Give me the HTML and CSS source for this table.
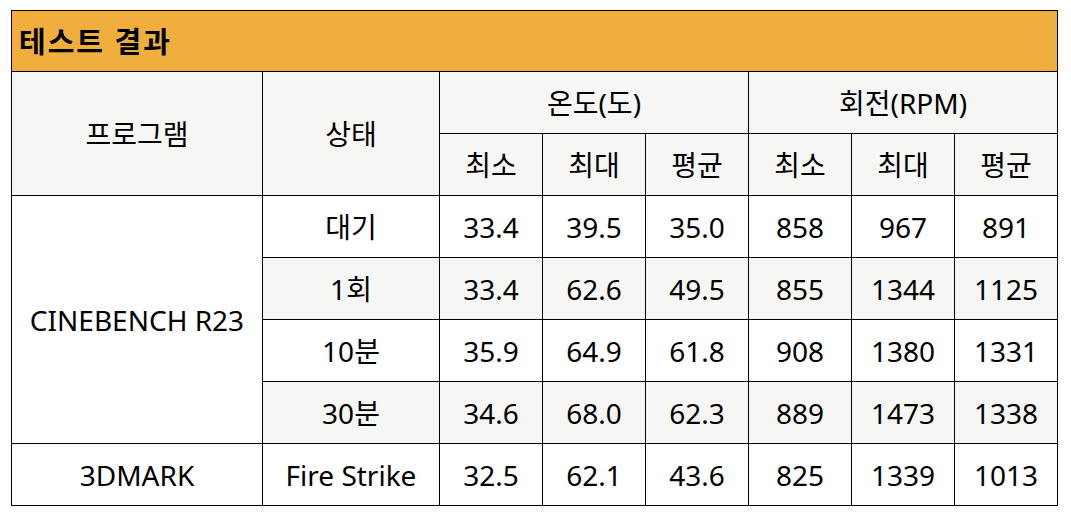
FILE: index.html
```html
<!DOCTYPE html>
<html lang="ko">
<head>
<meta charset="utf-8">
<link rel="stylesheet" href="styles.css">
</head>
<body>
<table class="result">
  <colgroup>
    <col class="c-prog"><col class="c-state">
    <col class="c-num"><col class="c-num"><col class="c-num">
    <col class="c-num"><col class="c-num"><col class="c-num">
  </colgroup>
  <thead>
    <tr class="title-row"><th colspan="8" class="title">테스트 결과</th></tr>
    <tr class="head">
      <th rowspan="2">프로그램</th>
      <th rowspan="2">상태</th>
      <th colspan="3">온도(도)</th>
      <th colspan="3">회전(RPM)</th>
    </tr>
    <tr class="head">
      <th>최소</th><th>최대</th><th>평균</th>
      <th>최소</th><th>최대</th><th>평균</th>
    </tr>
  </thead>
  <tbody>
    <tr>
      <td rowspan="4" class="prog">CINEBENCH R23</td>
      <td>대기</td><td>33.4</td><td>39.5</td><td>35.0</td><td>858</td><td>967</td><td>891</td>
    </tr>
    <tr class="alt">
      <td>1회</td><td>33.4</td><td>62.6</td><td>49.5</td><td>855</td><td>1344</td><td>1125</td>
    </tr>
    <tr>
      <td>10분</td><td>35.9</td><td>64.9</td><td>61.8</td><td>908</td><td>1380</td><td>1331</td>
    </tr>
    <tr class="alt">
      <td>30분</td><td>34.6</td><td>68.0</td><td>62.3</td><td>889</td><td>1473</td><td>1338</td>
    </tr>
    <tr>
      <td class="prog">3DMARK</td>
      <td>Fire Strike</td><td>32.5</td><td>62.1</td><td>43.6</td><td>825</td><td>1339</td><td>1013</td>
    </tr>
  </tbody>
</table>
</body>
</html>
```
FILE: styles.css
```css
html, body {
  margin: 0;
  background: #ffffff;
}
body {
  padding: 10px 11px;
  font-family: "Noto Sans", "Noto Sans CJK KR", sans-serif;
  color: #000;
}
.result {
  border-collapse: collapse;
  table-layout: fixed;
  width: 1047px;
  font-size: 28px;
}
.c-prog { width: 251px; }
.c-state { width: 177px; }
.c-num { width: 103px; }
.result th, .result td {
  border: 1px solid #000;
  padding: 0;
  text-align: center;
  vertical-align: middle;
  font-weight: normal;
  height: 62px;
  line-height: 1;
  box-sizing: border-box;
}
.result .title-row th {
  height: 61px;
}
.result .title {
  background: #f0af3c;
  text-align: left;
  padding-left: 7px;
  font-weight: bold;
  font-size: 29px;
  letter-spacing: 2px;
}
.head th {
  background: #f6f6f4;
}
.alt td {
  background: #f6f6f4;
}
.result td.prog {
  background: #ffffff;
}
```
